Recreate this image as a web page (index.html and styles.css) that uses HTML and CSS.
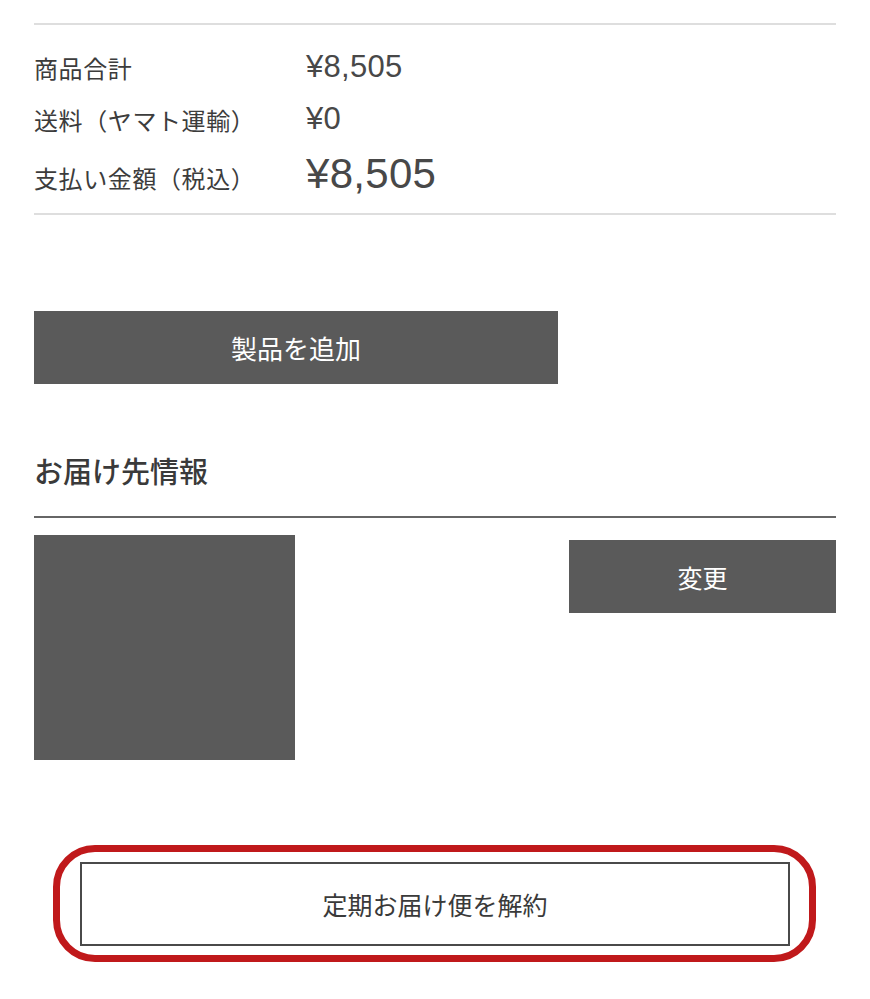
FILE: index.html
```html
<!DOCTYPE html>
<html lang="ja">
<head>
<meta charset="utf-8">
<title>定期お届け便</title>
<link rel="stylesheet" href="styles.css">
</head>
<body>
<div class="page">
  <section class="summary">
    <div class="row">
      <div class="label">商品合計</div>
      <div class="value">¥8,505</div>
    </div>
    <div class="row">
      <div class="label">送料（ヤマト運輸）</div>
      <div class="value">¥0</div>
    </div>
    <div class="row total">
      <div class="label">支払い金額（税込）</div>
      <div class="value">¥8,505</div>
    </div>
  </section>

  <button class="btn-dark btn-add">製品を追加</button>

  <h2 class="heading">お届け先情報</h2>

  <div class="address">
    <div class="address-block"></div>
    <button class="btn-dark btn-change">変更</button>
  </div>

  <div class="highlight">
    <button class="btn-cancel">定期お届け便を解約</button>
  </div>
</div>
</body>
</html>
```

FILE: styles.css
```css
html, body {
  margin: 0;
  padding: 0;
  background: #ffffff;
}

body {
  font-family: "Liberation Sans", "Noto Sans CJK JP", sans-serif;
  color: #3a3a3a;
}

.page {
  padding: 23px 34px 0 34px;
}

.summary {
  border-top: 2px solid #dedede;
  border-bottom: 2px solid #dedede;
  padding: 16px 0 10px 0;
}

.row {
  display: grid;
  grid-template-columns: 272px 1fr;
  align-items: center;
  height: 52px;
}

.row.total {
  height: 58px;
}

.label {
  font-family: "Noto Sans CJK JP", sans-serif;
  font-size: 24px;
  letter-spacing: 0.6px;
  color: #3c3c3c;
}

.row.total .label {
  padding-top: 6px;
}

.value {
  font-size: 31px;
  color: #484848;
  letter-spacing: 0.3px;
}

.row.total .value {
  font-size: 42px;
}

.btn-dark {
  display: flex;
  align-items: center;
  justify-content: center;
  background: #5a5a5a;
  color: #ffffff;
  border: none;
  font-family: "Noto Sans CJK JP", sans-serif;
  font-size: 25px;
  padding: 0;
  height: 73px;
}

.btn-add {
  width: 524px;
  margin-top: 96px;
  font-size: 26px;
}

.heading {
  margin: 66px 0 0 0;
  font-family: "Noto Sans CJK JP", sans-serif;
  font-weight: 500;
  font-size: 29px;
  line-height: 40px;
  color: #3a3a3a;
  padding-bottom: 26px;
  border-bottom: 2px solid #666666;
}

.address {
  display: flex;
  justify-content: space-between;
  align-items: flex-start;
  margin-top: 17px;
}

.address-block {
  width: 261px;
  height: 225px;
  background: #5a5a5a;
}

.btn-change {
  width: 267px;
  margin-top: 5px;
}

.highlight {
  margin: 85px 0 0 19px;
  width: fit-content;
  border: 7px solid #c0191b;
  border-radius: 42px;
  padding: 10px 19px 9px 20px;
}

.btn-cancel {
  display: flex;
  align-items: center;
  justify-content: center;
  width: 710px;
  height: 84px;
  background: #ffffff;
  border: 2px solid #4a4a4a;
  font-family: "Noto Sans CJK JP", sans-serif;
  font-size: 25px;
  color: #3a3a3a;
  padding: 0;
}
```
